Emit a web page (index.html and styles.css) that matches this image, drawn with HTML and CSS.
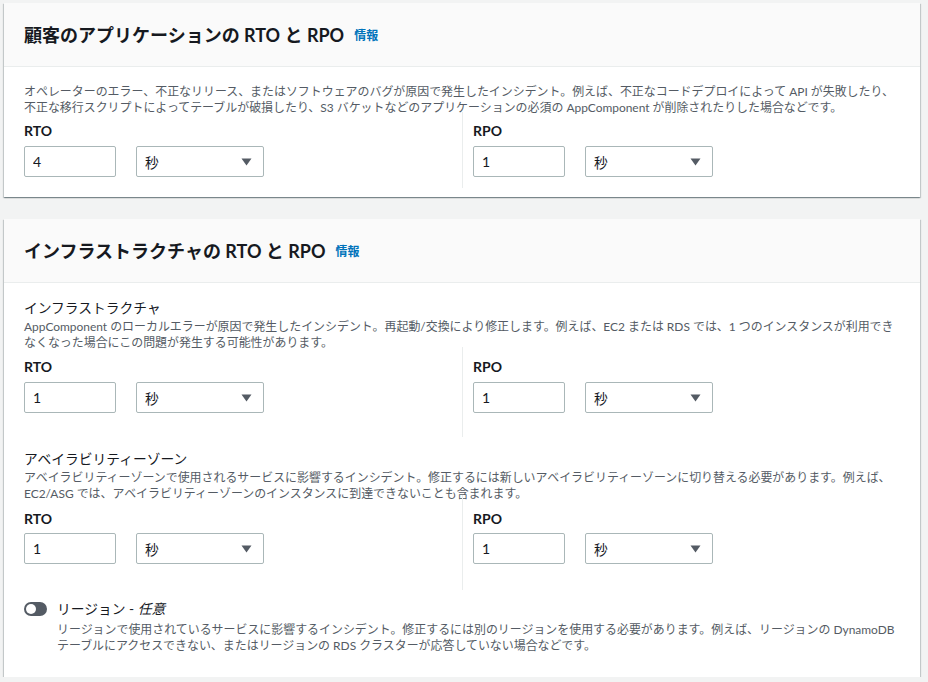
FILE: index.html
```html
<!DOCTYPE html>
<html lang="ja">
<head>
<meta charset="utf-8">
<title>RTO と RPO</title>
<link rel="stylesheet" href="styles.css">
</head>
<body>
<section class="card card-app">
  <header class="card-header">
    <h2 class="card-title">顧客のアプリケーションの RTO と RPO</h2>
    <a class="info" href="#">情報</a>
  </header>
  <div class="card-body body-app">
    <p class="desc">オペレーターのエラー、不正なリリース、またはソフトウェアのバグが原因で発生したインシデント。例えば、不正なコードデプロイによって API が失敗したり、<br>不正な移行スクリプトによってテーブルが破損したり、S3 バケットなどのアプリケーションの必須の AppComponent が削除されたりした場合などです。</p>
    <div class="cols cols-app">
      <div class="col">
        <label class="field-label">RTO</label>
        <div class="controls">
          <input class="num" type="text" value="4">
          <div class="select"><span>秒</span><svg class="caret" width="11" height="8" viewBox="0 0 11 8"><path d="M0.5 0.5h10L5.5 7.5z" fill="#545b64"/></svg></div>
        </div>
      </div>
      <div class="col">
        <label class="field-label">RPO</label>
        <div class="controls">
          <input class="num" type="text" value="1">
          <div class="select"><span>秒</span><svg class="caret" width="11" height="8" viewBox="0 0 11 8"><path d="M0.5 0.5h10L5.5 7.5z" fill="#545b64"/></svg></div>
        </div>
      </div>
    </div>
  </div>
</section>

<section class="card card-infra">
  <header class="card-header">
    <h2 class="card-title">インフラストラクチャの RTO と RPO</h2>
    <a class="info" href="#">情報</a>
  </header>
  <div class="card-body body-infra">
    <div class="group">
      <h3 class="group-title">インフラストラクチャ</h3>
      <p class="desc">AppComponent のローカルエラーが原因で発生したインシデント。再起動/交換により修正します。例えば、EC2 または RDS では、1 つのインスタンスが利用でき<br>なくなった場合にこの問題が発生する可能性があります。</p>
      <div class="cols cols-infra">
        <div class="col">
          <label class="field-label">RTO</label>
          <div class="controls">
            <input class="num" type="text" value="1">
            <div class="select"><span>秒</span><svg class="caret" width="11" height="8" viewBox="0 0 11 8"><path d="M0.5 0.5h10L5.5 7.5z" fill="#545b64"/></svg></div>
          </div>
        </div>
        <div class="col">
          <label class="field-label">RPO</label>
          <div class="controls">
            <input class="num" type="text" value="1">
            <div class="select"><span>秒</span><svg class="caret" width="11" height="8" viewBox="0 0 11 8"><path d="M0.5 0.5h10L5.5 7.5z" fill="#545b64"/></svg></div>
          </div>
        </div>
      </div>
    </div>

    <div class="group group-az">
      <h3 class="group-title">アベイラビリティーゾーン</h3>
      <p class="desc">アベイラビリティーゾーンで使用されるサービスに影響するインシデント。修正するには新しいアベイラビリティーゾーンに切り替える必要があります。例えば、<br>EC2/ASG では、アベイラビリティーゾーンのインスタンスに到達できないことも含まれます。</p>
      <div class="cols cols-infra cols-az">
        <div class="col">
          <label class="field-label">RTO</label>
          <div class="controls">
            <input class="num" type="text" value="1">
            <div class="select"><span>秒</span><svg class="caret" width="11" height="8" viewBox="0 0 11 8"><path d="M0.5 0.5h10L5.5 7.5z" fill="#545b64"/></svg></div>
          </div>
        </div>
        <div class="col">
          <label class="field-label">RPO</label>
          <div class="controls">
            <input class="num" type="text" value="1">
            <div class="select"><span>秒</span><svg class="caret" width="11" height="8" viewBox="0 0 11 8"><path d="M0.5 0.5h10L5.5 7.5z" fill="#545b64"/></svg></div>
          </div>
        </div>
      </div>
    </div>

    <div class="region">
      <div class="region-head">
        <span class="toggle"><span class="knob"></span></span>
        <span class="region-title">リージョン - <em>任意</em></span>
      </div>
      <p class="desc region-desc">リージョンで使用されているサービスに影響するインシデント。修正するには別のリージョンを使用する必要があります。例えば、リージョンの DynamoDB<br>テーブルにアクセスできない、またはリージョンの RDS クラスターが応答していない場合などです。</p>
    </div>
  </div>
</section>
</body>
</html>
```

FILE: styles.css
```css
* { box-sizing: border-box; }

body {
  margin: 0;
  padding: 3px 8px 0 4px;
  background: #f2f3f3;
  font-family: "Lato", "Noto Sans CJK JP", sans-serif;
  color: #16191f;
}

.card {
  background: #ffffff;
  box-shadow: 0 1px 1px 0 rgba(0, 28, 36, 0.3), 1px 1px 1px 0 rgba(0, 28, 36, 0.15), -1px 1px 1px 0 rgba(0, 28, 36, 0.15);
}

.card-app { margin-bottom: 22px; }

.card-header {
  height: 64px;
  padding: 0 20px;
  background: #fafafa;
  border-bottom: 1px solid #eaeded;
  display: flex;
  align-items: center;
  gap: 10px;
}

.card-title {
  margin: 0;
  font-size: 18px;
  font-weight: 700;
  line-height: 22px;
  color: #16191f;
}

.info {
  font-size: 12px;
  font-weight: 700;
  color: #0073bb;
  text-decoration: none;
  line-height: 16px;
  margin-top: 2px;
}

.card-body { padding: 0 20px; }
.body-app { padding-top: 17px; padding-bottom: 9px; }
.body-infra { padding-top: 15px; padding-bottom: 23px; }

.desc {
  margin: 0;
  font-size: 11.95px;
  line-height: 16px;
  color: #545b64;
  white-space: nowrap;
}

.group-title {
  margin: 0 0 1px;
  font-size: 13.75px;
  font-weight: 400;
  line-height: 20px;
  color: #16191f;
}

.cols {
  display: grid;
  grid-template-columns: 1fr 1fr;
  margin-top: -4px;
}

.col {
  padding-top: 10px;
  padding-bottom: 11px;
}

.col + .col {
  border-left: 1px solid #eaeded;
  padding-left: 10px;
}

.cols-infra .col { padding-top: 11px; padding-bottom: 24px; }
.cols-az { margin-top: -7px; }
.cols-az .col { padding-top: 15px; padding-bottom: 26px; }

.group-az { margin-top: 12px; }

.field-label {
  display: block;
  font-size: 14px;
  font-weight: 700;
  line-height: 18px;
  color: #16191f;
}

.controls {
  display: flex;
  gap: 20px;
  margin-top: 6px;
}
.cols-az .controls { margin-top: 5px; }

.num {
  width: 92px;
  height: 31px;
  margin: 0;
  padding: 0 8px;
  border: 1px solid #aab7b8;
  border-radius: 2px;
  background: #ffffff;
  font-family: "Lato", "Noto Sans CJK JP", sans-serif;
  font-size: 14px;
  color: #16191f;
  outline: none;
}

.select {
  width: 128px;
  height: 31px;
  padding: 0 11px 0 8px;
  border: 1px solid #aab7b8;
  border-radius: 2px;
  background: #ffffff;
  display: flex;
  align-items: center;
  justify-content: space-between;
  font-size: 13.75px;
  color: #16191f;
}

.caret { display: block; }

.region { margin-top: 9px; }

.region-head {
  display: flex;
  align-items: center;
  gap: 10px;
}

.toggle {
  width: 23px;
  height: 14px;
  border-radius: 7px;
  background: #545b64;
  display: flex;
  align-items: center;
  padding-left: 2px;
}

.knob {
  width: 10px;
  height: 10px;
  border-radius: 50%;
  background: #ffffff;
}

.region-title {
  font-size: 13.75px;
  line-height: 20px;
  color: #16191f;
}

.region-title em { font-style: italic; }

.region-desc {
  margin-top: 3px;
  padding-left: 33px;
}
```
